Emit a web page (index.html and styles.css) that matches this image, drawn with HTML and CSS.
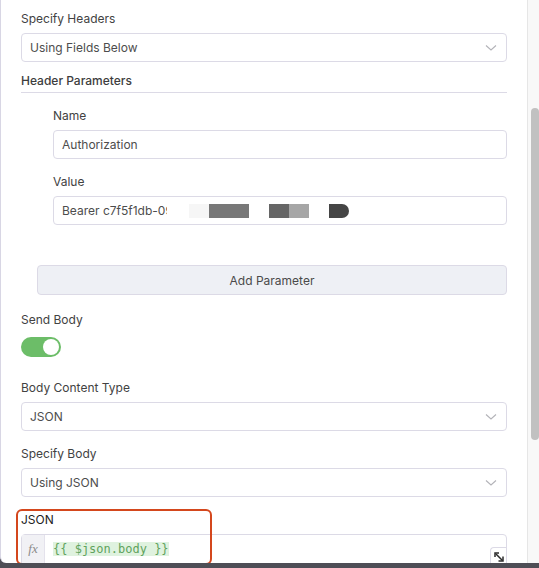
FILE: index.html
```html
<!DOCTYPE html>
<html lang="en">
  <head>
    <meta charset="UTF-8" />
    <meta name="viewport" content="width=device-width, initial-scale=1.0" />
    <title>HTTP Request</title>
    <link rel="stylesheet" href="styles.css">
  </head>
  <body>
    <div class="frame">
      <div class="panel">
        <div class="field field-tight">
          <p class="field-label">Specify Headers</p>
          <div class="select">
            <span>Using Fields Below</span>
            <svg class="chevron" width="12" height="8" viewBox="0 0 12 8"><path d="M1 1.5 L6 6 L11 1.5" fill="none" stroke="#b3b3b8" stroke-width="1.1"/></svg>
          </div>
        </div>

        <p class="section-title">Header Parameters</p>

        <div class="param-group">
          <div class="field">
            <p class="field-label">Name</p>
            <div class="input">Authorization</div>
          </div>
          <div class="field">
            <p class="field-label">Value</p>
            <div class="input input-secret">
              <span class="secret-text">Bearer c7f5f1db-09</span><span class="mask mask-cover"></span><span class="mask mask-faint"></span><span class="mask mask-mid"></span><span class="mask mask-dark gap"></span><span class="mask mask-light"></span><span class="mask mask-end gap"></span>
            </div>
          </div>
        </div>

        <button class="add-param">Add Parameter</button>

        <div class="field field-wide">
          <p class="field-label">Send Body</p>
          <div class="toggle"><span class="toggle-knob"></span></div>
        </div>

        <div class="field">
          <p class="field-label">Body Content Type</p>
          <div class="select">
            <span>JSON</span>
            <svg class="chevron" width="12" height="8" viewBox="0 0 12 8"><path d="M1 1.5 L6 6 L11 1.5" fill="none" stroke="#b3b3b8" stroke-width="1.1"/></svg>
          </div>
        </div>

        <div class="field">
          <p class="field-label">Specify Body</p>
          <div class="select">
            <span>Using JSON</span>
            <svg class="chevron" width="12" height="8" viewBox="0 0 12 8"><path d="M1 1.5 L6 6 L11 1.5" fill="none" stroke="#b3b3b8" stroke-width="1.1"/></svg>
          </div>
        </div>

        <div class="field field-json">
          <div class="highlight"></div>
          <p class="field-label label-plain">JSON</p>
          <div class="editor">
            <div class="editor-gutter">fx</div>
            <div class="editor-code"><span class="expr">{{ $json.body }}</span></div>
            <div class="editor-expand">
              <svg width="14" height="14" viewBox="0 0 14 14">
                <path d="M3 7 V3 H7" fill="none" stroke="#2b2b2b" stroke-width="1.5"/>
                <path d="M4 4 L10.5 10.5" fill="none" stroke="#2b2b2b" stroke-width="1.5"/>
                <path d="M11 6.5 V11 H6.5" fill="none" stroke="#2b2b2b" stroke-width="1.5"/>
              </svg>
            </div>
          </div>
        </div>
      </div>
      <div class="scrollbar"><div class="scroll-thumb"></div></div>
    </div>
    <div class="bottom-bar"></div>
  </body>
</html>
```

FILE: styles.css
```css
body {
  margin: 0;
  height: 568px;
  display: flex;
  flex-direction: column;
  background-color: #4e4e56;
  font-family: Inter, "Liberation Sans", sans-serif;
  font-size: 12px;
  color: #444;
  overflow: hidden;
}

.frame {
  display: flex;
  height: 563px;
}

.panel {
  flex: 1;
  background-color: #fff;
  border-left: 1px solid #d8d6e4;
  border-bottom-left-radius: 6px;
  padding: 10px 20px 0 20px;
  overflow: hidden;
}

.scrollbar {
  width: 11px;
  background-color: #f8f8f8;
  border-left: 1px solid #e6e6e6;
  padding-top: 108px;
  display: flex;
  justify-content: center;
}

.scroll-thumb {
  width: 8px;
  height: 332px;
  margin-left: 2px;
  background-color: #c1c1c1;
  border-radius: 4px;
}

.bottom-bar {
  height: 5px;
}

.field {
  margin-bottom: 14px;
}

.field-tight {
  margin-bottom: 10px;
}

.field-label {
  margin: 0 0 5px 0;
  line-height: 18px;
  color: #424242;
}

.select,
.input {
  height: 29px;
  box-sizing: border-box;
  border: 1px solid #dcdae6;
  border-radius: 4px;
  padding: 0 8px;
  display: flex;
  align-items: center;
  color: #4d4d4d;
}

.select {
  justify-content: space-between;
}

.chevron {
  margin-right: 1px;
}

.section-title {
  margin: 0 0 14px 0;
  line-height: 18px;
  padding-bottom: 2px;
  border-bottom: 1px solid #dcdae6;
  color: #3d3d3d;
  font-weight: 500;
}

.param-group {
  padding-left: 32px;
}

.input-secret {
  white-space: nowrap;
}

.mask {
  display: inline-block;
  height: 14px;
  width: 20px;
}

/* blank strip hiding the tail of the token */
.mask-cover {
  width: 22px;
  margin-left: -6px;
  background-color: #fff;
}

.mask-faint {
  background-color: #f6f6f6;
}

.mask-mid {
  width: 40px;
  background-color: #787878;
}

.mask-dark {
  background-color: #666;
}

.mask-light {
  background-color: #a6a6a6;
}

.mask-end {
  background-color: #454545;
  border-radius: 0 8px 8px 0;
}

.gap {
  margin-left: 20px;
}

.add-param {
  display: block;
  width: calc(100% - 16px);
  margin: 40px 0 16px 16px;
  height: 30px;
  border: 1px solid #dcdae6;
  border-radius: 4px;
  background-color: #eef0f5;
  font-family: inherit;
  font-size: 12px;
  color: #4a4a4a;
}

.field-wide {
  margin-bottom: 22px;
}

.field-wide .field-label {
  margin-bottom: 8px;
}

.toggle {
  width: 40px;
  height: 20px;
  border-radius: 10px;
  background-color: #6cbd68;
  display: flex;
  align-items: center;
  justify-content: flex-end;
  padding: 0 2px;
  box-sizing: border-box;
}

.toggle-knob {
  width: 16px;
  height: 16px;
  border-radius: 50%;
  background-color: #fff;
}

.field-json {
  position: relative;
}

.label-plain {
  color: #222;
}

/* orange outline drawn over the JSON field */
.highlight {
  position: absolute;
  left: -5px;
  top: -2px;
  width: 192px;
  height: 52px;
  border: 2px solid #d4471d;
  border-radius: 6px;
  z-index: 2;
}

.editor {
  position: relative;
  display: flex;
  height: 40px;
  border: 1px solid #dcdae6;
  border-radius: 4px 4px 0 0;
}

.editor-gutter {
  width: 22px;
  background-color: #f1f1f5;
  border-right: 1px solid #e4e2ec;
  color: #8a8a8a;
  font-family: "Liberation Serif", serif;
  font-style: italic;
  font-size: 13px;
  text-align: center;
  padding-top: 6px;
}

.editor-code {
  padding: 6px 0 0 8px;
  font-family: "DejaVu Sans Mono", monospace;
  font-size: 12px;
  line-height: 17px;
}

.expr {
  color: #5fa35d;
  background-color: #dff2df;
}

.editor-expand {
  position: absolute;
  right: 0;
  top: 12px;
  width: 16px;
  height: 18px;
  border-top: 1px solid #dcdae6;
  border-left: 1px solid #dcdae6;
  border-top-left-radius: 4px;
  background-color: #fff;
  display: flex;
  justify-content: center;
  padding-top: 2px;
  box-sizing: border-box;
}
```
